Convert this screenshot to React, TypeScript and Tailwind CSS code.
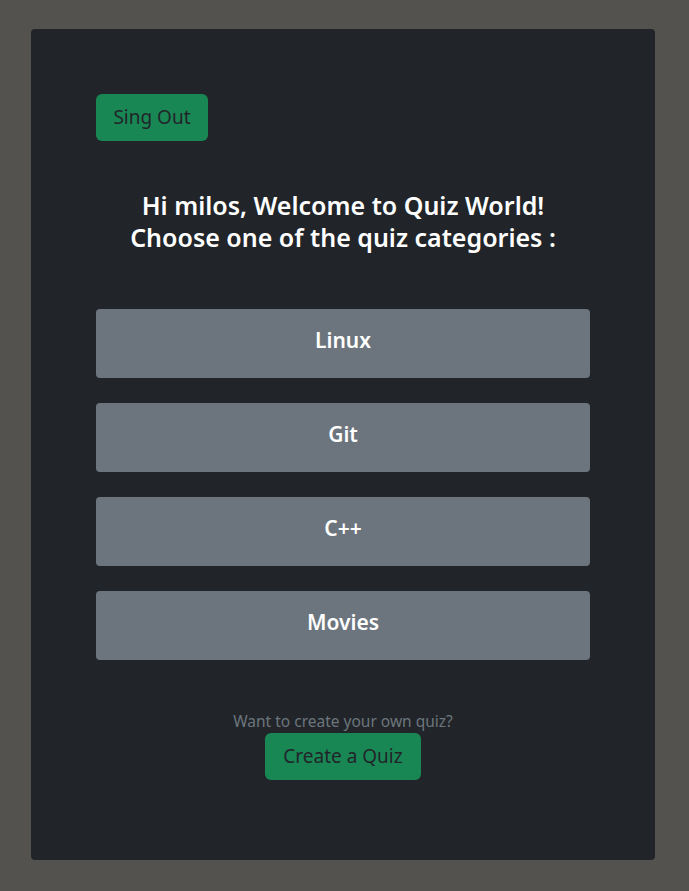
const categories = ['Linux', 'Git', 'C++', 'Movies'];

export default function App() {
  return (
    <div
      className="min-h-[891px] bg-[#53524f] pt-[29px] pb-[30px]"
      style={{ fontFamily: '"Noto Sans", "Open Sans", sans-serif' }}
    >
      <div className="ml-[31px] w-[624px] h-[831px] rounded bg-[#212529] px-[65px] pt-[65px]">
        <button className="h-[47px] w-[112px] rounded-md bg-[#198754] text-[19px] text-[#212529]">
          Sing Out
        </button>

        <h2 className="mt-[48px] text-center text-[25px] font-semibold leading-[32px] text-white">
          Hi milos, Welcome to Quiz World!
          <br />
          Choose one of the quiz categories :
        </h2>

        <div className="mt-[56px] flex flex-col gap-[25px]">
          {categories.map((c) => (
            <div
              key={c}
              className="flex h-[69px] items-center justify-center rounded bg-[#6c757d] pb-[5px] text-[21px] font-semibold text-white"
            >
              {c}
            </div>
          ))}
        </div>

        <div className="mt-[49px] flex flex-col items-center">
          <p className="text-[15.5px] leading-[24px] text-[#6c757d]">Want to create your own quiz?</p>
          <button className="h-[47px] w-[156px] rounded-md bg-[#198754] text-[19px] text-[#212529]">
            Create a Quiz
          </button>
        </div>
      </div>
    </div>
  );
}
